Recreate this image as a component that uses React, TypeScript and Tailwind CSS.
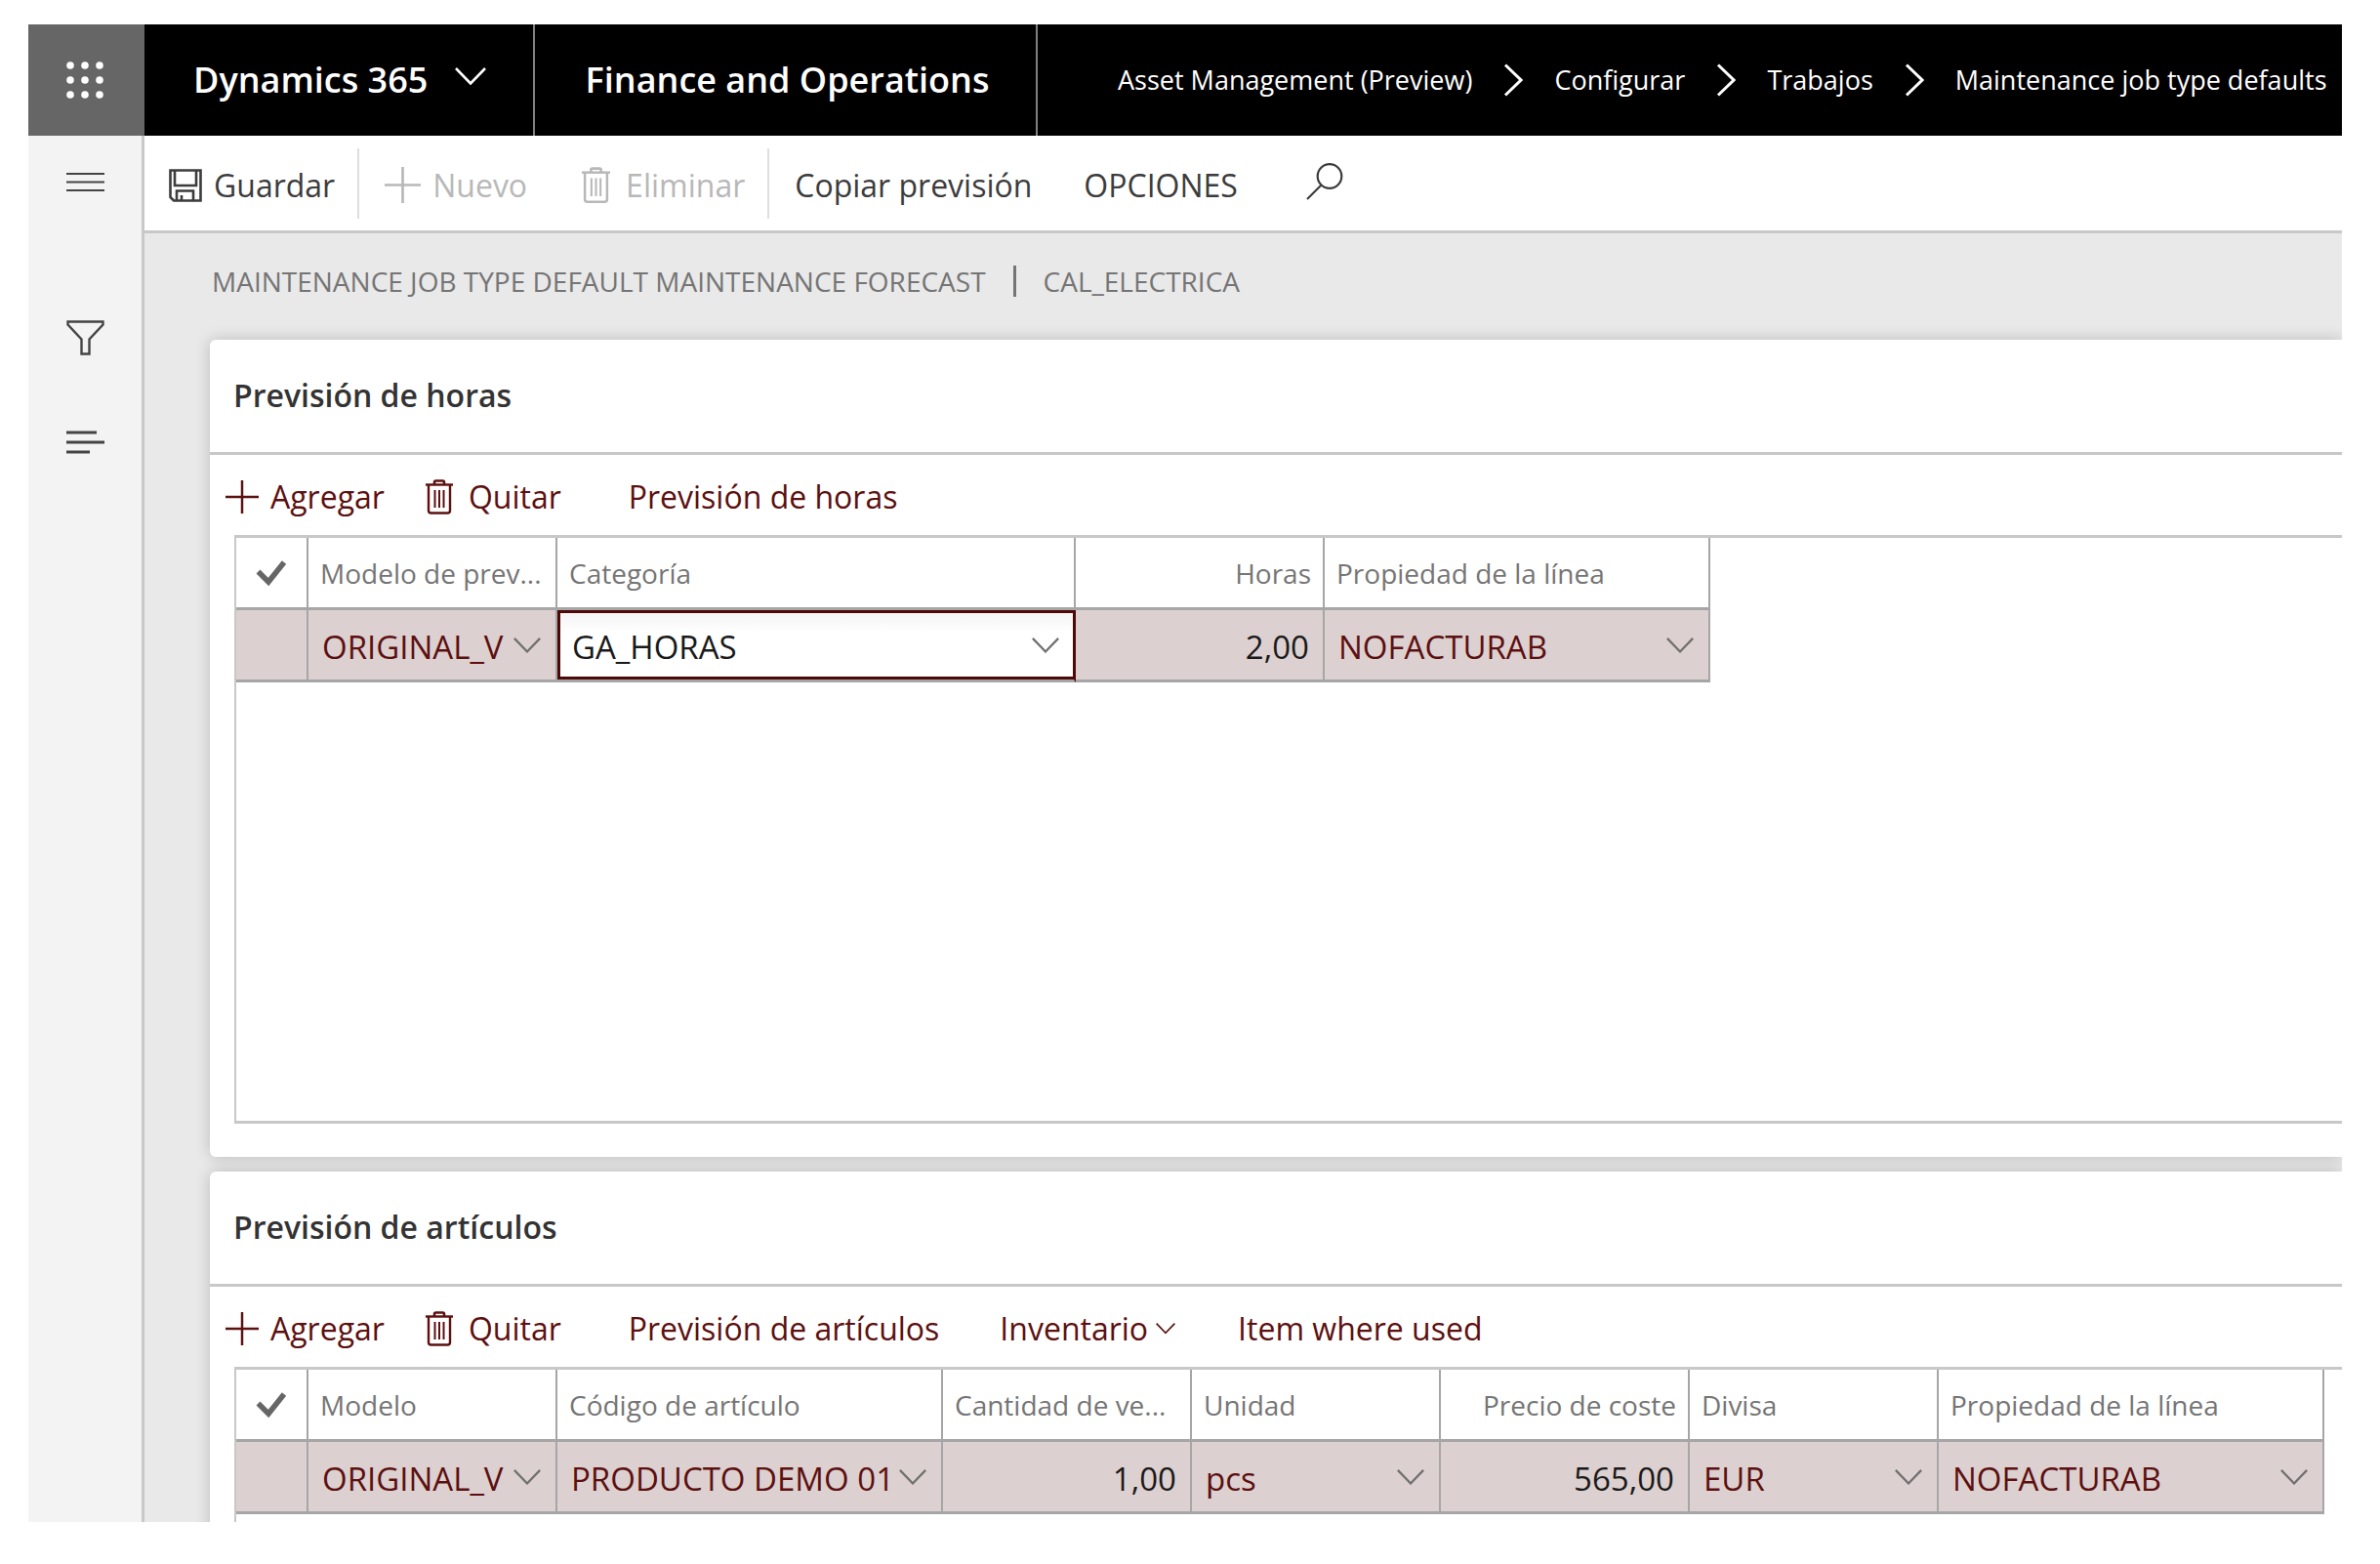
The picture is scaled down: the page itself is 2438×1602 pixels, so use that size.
import type { ReactNode } from "react";
import clsx from "clsx";

interface Column {
  title: string;
  value: string;
  width: string;
  kind: "lookup" | "number";
  focused?: boolean;
}

const breadcrumbs = ["Asset Management (Preview)", "Configurar", "Trabajos", "Maintenance job type defaults"];

const hourColumns: Column[] = [
  { title: "Modelo de prev...", value: "ORIGINAL_V", width: "w-[255px]", kind: "lookup" },
  { title: "Categoría", value: "GA_HORAS", width: "w-[531px]", kind: "lookup", focused: true },
  { title: "Horas", value: "2,00", width: "w-[255px]", kind: "number" },
  { title: "Propiedad de la línea", value: "NOFACTURAB", width: "w-[395px]", kind: "lookup" },
];

const itemColumns: Column[] = [
  { title: "Modelo", value: "ORIGINAL_V", width: "w-[255px]", kind: "lookup" },
  { title: "Código de artículo", value: "PRODUCTO DEMO 01", width: "w-[395px]", kind: "lookup" },
  { title: "Cantidad de ve...", value: "1,00", width: "w-[255px]", kind: "number" },
  { title: "Unidad", value: "pcs", width: "w-[255px]", kind: "lookup" },
  { title: "Precio de coste", value: "565,00", width: "w-[255px]", kind: "number" },
  { title: "Divisa", value: "EUR", width: "w-[255px]", kind: "lookup" },
  { title: "Propiedad de la línea", value: "NOFACTURAB", width: "w-[395px]", kind: "lookup" },
];

/* Icons */

function WaffleIcon() {
  return (
    <svg width="38" height="38" viewBox="0 0 38 38" fill="currentColor">
      {[4, 19, 34].map((y) => [4, 19, 34].map((x) => <circle key={`${x}-${y}`} cx={x} cy={y} r="3.8" />))}
    </svg>
  );
}

function ChevronDown({ className }: { className?: string }) {
  return (
    <svg viewBox="0 0 32 18" fill="none" stroke="currentColor" strokeWidth="2.6" className={className}>
      <path d="M1 1l15 15.500L31 1" />
    </svg>
  );
}

function ChevronRight() {
  return (
    <svg width="20" height="34" viewBox="0 0 20 34" fill="none" stroke="currentColor" strokeWidth="3" className="shrink-0">
      <path d="M2 1.500L18 17 2 32.500" />
    </svg>
  );
}

function PlusIcon({ className }: { className?: string }) {
  return (
    <svg viewBox="0 0 36 36" fill="none" stroke="currentColor" strokeWidth="2.6" className={className}>
      <path d="M18 0v36M0 18h36" />
    </svg>
  );
}

function TrashIcon({ className }: { className?: string }) {
  return (
    <svg viewBox="0 0 28 36" fill="none" stroke="currentColor" strokeWidth="2" className={className}>
      <path d="M0 5.500h28" strokeWidth="2.400" />
      <path d="M9 5V3a1.500 1.500 0 0 1 1.500-1.500h7A1.500 1.500 0 0 1 19 3v2" strokeWidth="2.600" />
      <path d="M3 5v27a2.500 2.500 0 0 0 2.500 2.500h17A2.500 2.500 0 0 0 25 32V5" strokeWidth="2.400" />
      <path d="M9.500 11v18M14 11v18M18.500 11v18" />
    </svg>
  );
}

function SaveIcon() {
  return (
    <svg width="34" height="34" viewBox="0 0 34 34" fill="none" stroke="currentColor" strokeWidth="2.600">
      <path d="M1.500 1.500h31v31H5L1.500 29z" />
      <path d="M6 1.500V17h22V1.500M8 32.500V22.500h17v10M13 32.500V27" />
    </svg>
  );
}

function SearchIcon() {
  return (
    <svg width="38" height="38" viewBox="0 0 38 38" fill="none" stroke="currentColor" strokeWidth="2.200">
      <circle cx="24" cy="13.500" r="12.300" />
      <path d="M15.500 22.500L1 37" />
    </svg>
  );
}

function CheckIcon() {
  return (
    <svg width="32" height="28" viewBox="0 0 32 28" fill="none" stroke="currentColor" strokeWidth="5.600">
      <path d="M2.500 12.500L13 23 29 3" />
    </svg>
  );
}

function MenuIcon() {
  return (
    <svg width="39" height="21" viewBox="0 0 39 21" stroke="currentColor" strokeWidth="2">
      <path d="M0 2h39M0 10.500h39M0 19h39" />
    </svg>
  );
}

function FilterIcon() {
  return (
    <svg width="39" height="36" viewBox="0 0 39 36" fill="none" stroke="currentColor" strokeWidth="2.400">
      <path d="M1.500 1.500h36v3L23.500 19.500V34.500h-8V19.500L1.500 4.500z" />
    </svg>
  );
}

function ListIcon() {
  return (
    <svg width="39" height="24" viewBox="0 0 39 24" stroke="currentColor" strokeWidth="3">
      <path d="M0 2h31M0 12h39M0 22h24" />
    </svg>
  );
}

/* Shell */

function TopBar() {
  return (
    <header className="flex h-[114px] shrink-0 items-stretch overflow-hidden bg-black text-white whitespace-nowrap">
      <button aria-label="Aplicaciones" className="flex w-[119px] shrink-0 items-center justify-center bg-[#666666] pr-[3px]">
        <WaffleIcon />
      </button>
      <button className="flex w-[400px] shrink-0 items-center gap-7 border-r-2 border-[#808080] pl-[50px] text-[36px] font-semibold">
        Dynamics 365
        <ChevronDown className="mb-2 w-8" />
      </button>
      <div className="flex w-[515px] shrink-0 items-center justify-center border-r-2 border-[#808080] pl-1 text-[36px] font-semibold">
        Finance and Operations
      </div>
      <nav className="flex shrink-0 items-center gap-8 pl-[82px] text-[27px]">
        {breadcrumbs.map((item, i) => (
          <div key={item} className="flex items-center gap-8">
            {i > 0 && <ChevronRight />}
            <a href="#">{item}</a>
          </div>
        ))}
      </nav>
    </header>
  );
}

function SideBar() {
  return (
    <aside className="flex w-[119px] shrink-0 flex-col items-center border-r-3 border-[#c8c8c8] bg-[#f3f3f3] pt-[37px] text-[#444444]">
      <button aria-label="Menú">
        <MenuIcon />
      </button>
      <button aria-label="Filtro" className="mt-[131px]">
        <FilterIcon />
      </button>
      <button aria-label="Lista" className="mt-[77px]">
        <ListIcon />
      </button>
    </aside>
  );
}

function CommandBar() {
  return (
    <div className="flex h-[100px] shrink-0 items-center border-b-3 border-[#c8c8c8] bg-white pt-1 text-[32px] text-[#3c3c3c] whitespace-nowrap">
      <button className="flex items-center gap-3 pr-[23px] pl-[25px]">
        <SaveIcon />
        Guardar
      </button>
      <div className="mb-1 h-[72px] w-0.5 bg-[#dedede]" />
      <button disabled className="flex items-center gap-3 pl-[26px] text-[#b8b8b8]">
        <PlusIcon className="w-[37px]" />
        Nuevo
      </button>
      <button disabled className="flex items-center gap-4 pr-[23px] pl-[56px] text-[#b8b8b8]">
        <TrashIcon className="w-[29px]" />
        Eliminar
      </button>
      <div className="mb-1 h-[72px] w-0.5 bg-[#dedede]" />
      <button className="pl-[26px]">Copiar previsión</button>
      <button className="pl-[53px]">OPCIONES</button>
      <button aria-label="Buscar" className="pb-2 pl-[70px]">
        <SearchIcon />
      </button>
    </div>
  );
}

/* Grid */

function Cell({ column }: { column: Column }) {
  const { title, value, kind, focused } = column;

  if (kind === "number") {
    return (
      <input
        aria-label={title}
        defaultValue={value}
        className="block h-[71px] w-full bg-transparent pt-1 pr-[14px] text-right text-[#1a1a1a] outline-none"
      />
    );
  }

  return (
    <div className="relative">
      <select
        aria-label={title}
        defaultValue={value}
        className={clsx(
          "block h-[71px] w-full appearance-none pt-1 outline-none",
          focused
            ? "border-3 border-r-1 border-[#4d0808] bg-linear-to-b from-[#f4f4f4] to-white to-30% pl-3 text-[#1a1a1a]"
            : "bg-transparent pl-[14px] text-[#5c1010]",
        )}
      >
        <option>{value}</option>
      </select>
      <ChevronDown className="pointer-events-none absolute top-7 right-[15px] w-7 text-[#707070]" />
    </div>
  );
}

function Grid({ columns, label }: { columns: Column[]; label: string }) {
  return (
    <div className="ml-[25px] h-[603px] overflow-hidden border-y-3 border-l-2 border-[#c8c8c8]">
      <table aria-label={label} className="w-max table-fixed border-separate border-spacing-0">
        <thead>
          <tr className="h-[74px] text-[28px] text-[#757575]">
            <th className="w-[74px] border-r-2 border-b-3 border-[#a6a6a6] p-0">
              <button aria-label="Seleccionar todo" className="flex w-full justify-center text-[#666666]">
                <CheckIcon />
              </button>
            </th>
            {columns.map((column) => (
              <th
                key={column.title}
                className={clsx(
                  "border-r-2 border-b-3 border-[#a6a6a6] px-3 font-normal whitespace-nowrap",
                  column.width,
                  column.kind === "number" && !column.title.endsWith("...") ? "text-right" : "text-left",
                )}
              >
                {column.title}
              </th>
            ))}
          </tr>
        </thead>
        <tbody>
          <tr className="h-[74px] bg-[#ddd0d0] text-[33px]">
            <td className="border-r-2 border-b-3 border-[#a6a6a6]" />
            {columns.map((column) => (
              <td
                key={column.title}
                className={clsx(
                  "border-r-2 border-b-3 border-[#a6a6a6] p-0",
                  column.focused && "border-r-[#4d0808]",
                )}
              >
                <Cell column={column} />
              </td>
            ))}
          </tr>
        </tbody>
      </table>
    </div>
  );
}

interface SectionProps {
  title: string;
  columns: Column[];
  actions: ReactNode;
}

function Section({ title, columns, actions }: SectionProps) {
  return (
    <section className="shrink-0 rounded-l-md bg-white pb-[34px] shadow-[0_0_16px_rgba(0,0,0,0.2)]">
      <h2 className="flex h-[118px] items-center border-b-3 border-[#c8c8c8] pb-0.5 pl-6 text-[32px] font-semibold text-[#333333]">
        {title}
      </h2>
      <div className="flex h-[82px] items-center pt-1 pl-4 text-[32px] text-[#5c1010] whitespace-nowrap">
        <button className="flex items-center gap-3">
          <PlusIcon className="w-[34px]" />
          Agregar
        </button>
        <button className="ml-[42px] flex items-center gap-4">
          <TrashIcon className="w-7" />
          Quitar
        </button>
        {actions}
      </div>
      <Grid columns={columns} label={title} />
    </section>
  );
}

export default function App() {
  return (
    <div className="h-screen overflow-hidden bg-white pt-[25px] pr-[39px] pb-[43px] pl-[29px] font-['Open_Sans',sans-serif]">
      <div className="flex h-full flex-col overflow-hidden">
        <TopBar />
        <div className="flex min-h-0 flex-1">
          <SideBar />
          <main className="flex min-w-0 flex-1 flex-col overflow-hidden bg-[#e9e9e9]">
            <CommandBar />
            <h1 className="flex h-[109px] shrink-0 items-center gap-7 pb-3 pl-[69px] text-[28px] text-[#757575] whitespace-nowrap">
              <span>MAINTENANCE JOB TYPE DEFAULT MAINTENANCE FORECAST</span>
              <span className="h-8 w-[3px] bg-[#757575]" />
              <span>CAL_ELECTRICA</span>
            </h1>
            <div className="flex flex-col gap-[15px] pl-[67px]">
              <Section
                title="Previsión de horas"
                columns={hourColumns}
                actions={<button className="ml-[69px]">Previsión de horas</button>}
              />
              <Section
                title="Previsión de artículos"
                columns={itemColumns}
                actions={
                  <>
                    <button className="ml-[69px]">Previsión de artículos</button>
                    <button className="ml-[62px] flex items-center gap-2">
                      Inventario
                      <ChevronDown className="w-5" />
                    </button>
                    <button className="ml-16">Item where used</button>
                  </>
                }
              />
            </div>
          </main>
        </div>
      </div>
    </div>
  );
}
